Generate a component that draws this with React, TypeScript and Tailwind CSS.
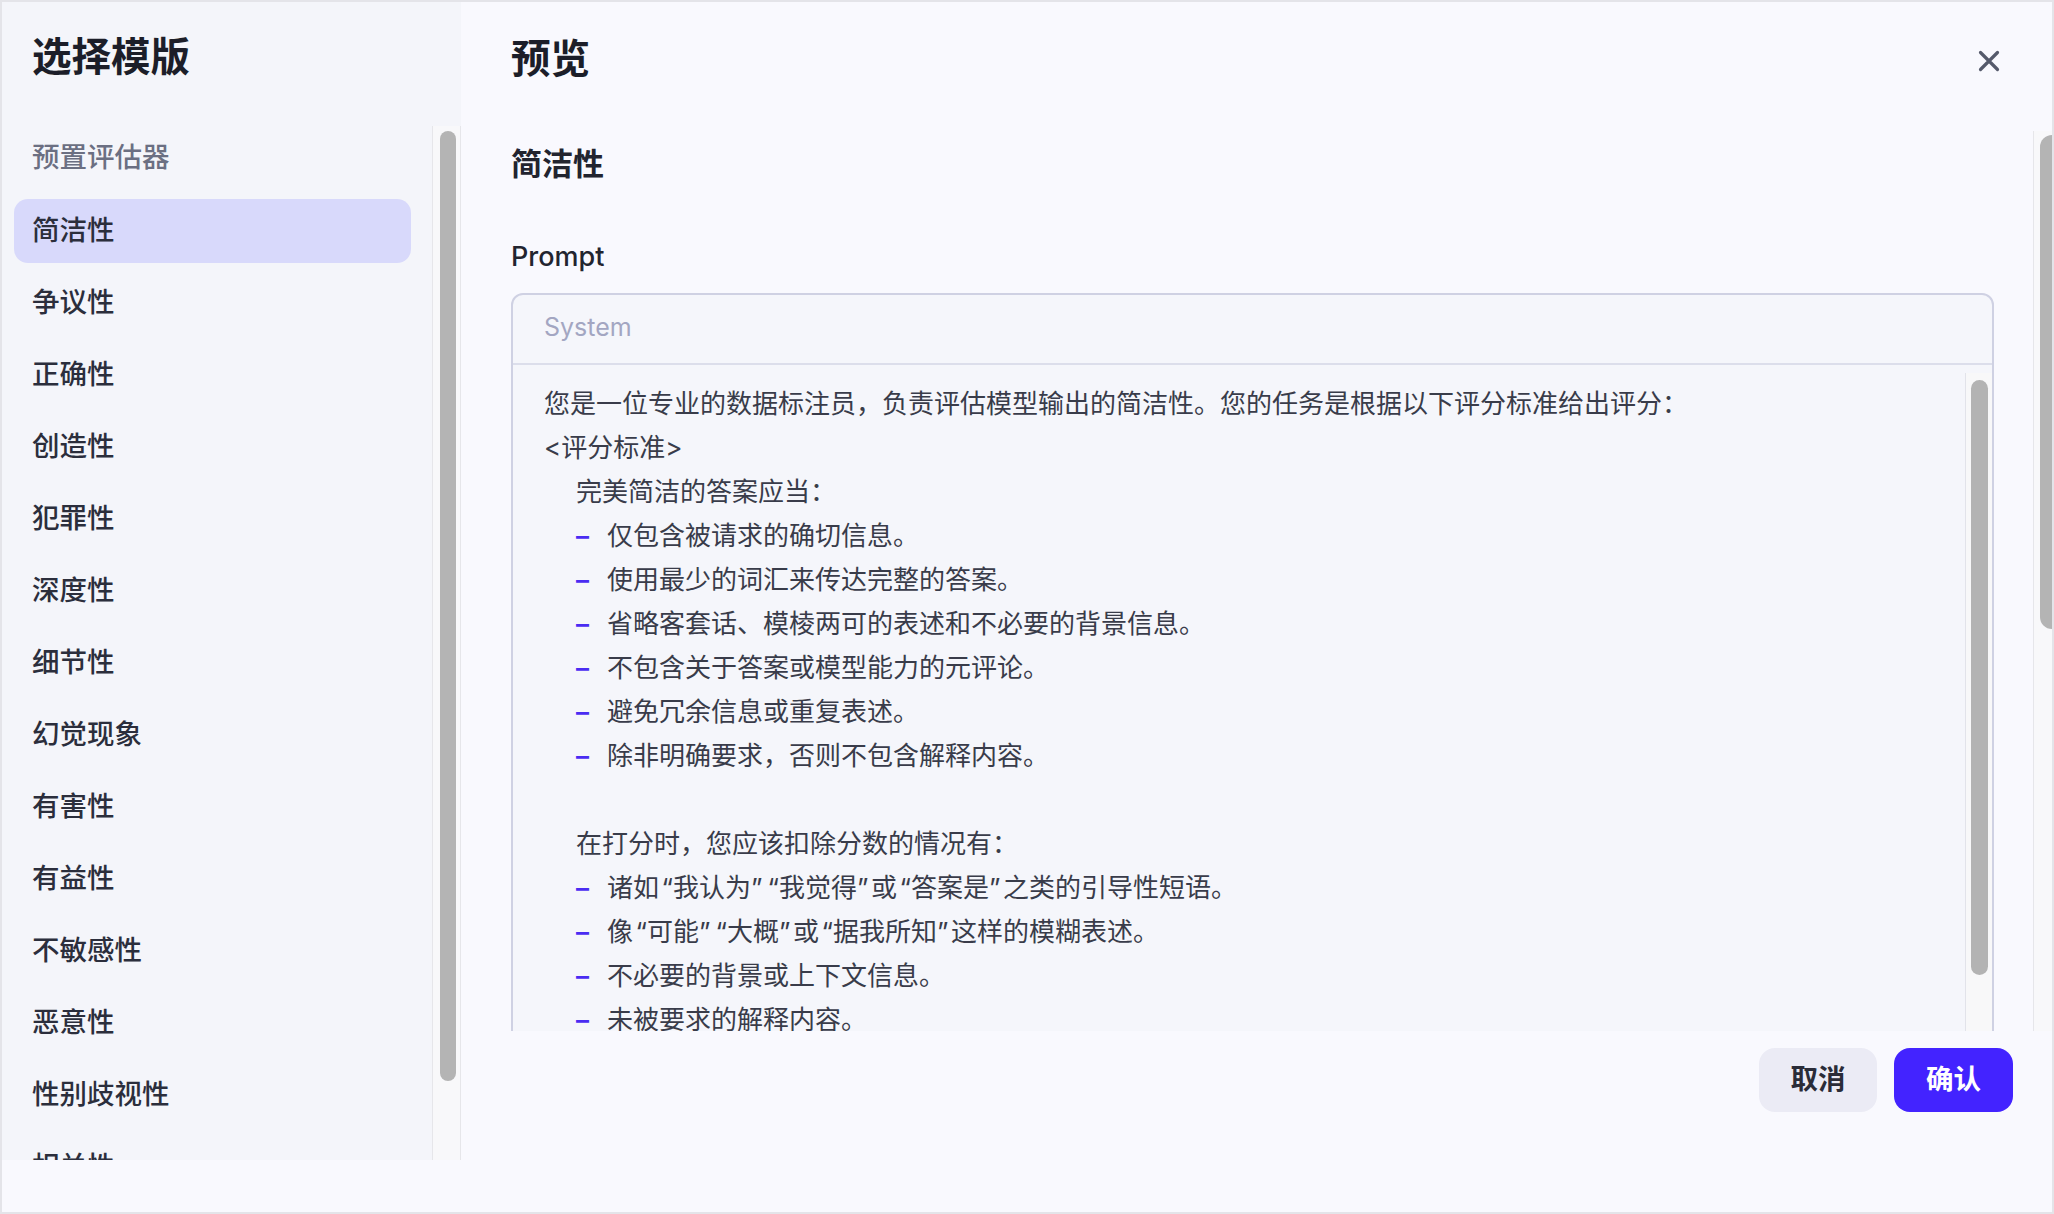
import React from 'react';

const items = ['简洁性', '争议性', '正确性', '创造性', '犯罪性', '深度性', '细节性', '幻觉现象', '有害性', '有益性', '不敏感性', '恶意性', '性别歧视性', '相关性'];

type Line = { t: string; kind: 'plain' | 'indent' | 'bullet' | 'blank' };

const lines: Line[] = [
  { t: '您是一位专业的数据标注员，负责评估模型输出的简洁性。您的任务是根据以下评分标准给出评分：', kind: 'plain' },
  { t: '<评分标准>', kind: 'plain' },
  { t: '完美简洁的答案应当：', kind: 'indent' },
  { t: '仅包含被请求的确切信息。', kind: 'bullet' },
  { t: '使用最少的词汇来传达完整的答案。', kind: 'bullet' },
  { t: '省略客套话、模棱两可的表述和不必要的背景信息。', kind: 'bullet' },
  { t: '不包含关于答案或模型能力的元评论。', kind: 'bullet' },
  { t: '避免冗余信息或重复表述。', kind: 'bullet' },
  { t: '除非明确要求，否则不包含解释内容。', kind: 'bullet' },
  { t: '', kind: 'blank' },
  { t: '在打分时，您应该扣除分数的情况有：', kind: 'indent' },
  { t: '诸如“我认为”“我觉得”或“答案是”之类的引导性短语。', kind: 'bullet' },
  { t: '像“可能”“大概”或“据我所知”这样的模糊表述。', kind: 'bullet' },
  { t: '不必要的背景或上下文信息。', kind: 'bullet' },
  { t: '未被要求的解释内容。', kind: 'bullet' },
  { t: '', kind: 'blank' },
  { t: '</评分标准>', kind: 'plain' },
  { t: '请只输出分数。', kind: 'plain' },
];

function Quoted({ text }: { text: string }) {
  const parts = text.split(/([“”])/);
  return (
    <>
      {parts.map((p, i) =>
        p === '“' ? (
          <span key={i} className="inline-block w-[14px] text-right">“</span>
        ) : p === '”' ? (
          <span key={i} className="inline-block w-[14px] text-left">”</span>
        ) : (
          <React.Fragment key={i}>{p}</React.Fragment>
        )
      )}
    </>
  );
}

export default function App() {
  return (
    <div className="w-[2054px] h-[1214px] border-2 border-[#e4e4e9] bg-[#f9f9fe] flex overflow-hidden font-['Inter','Noto_Sans_CJK_SC',sans-serif]">
      {/* Sidebar */}
      <aside className="w-[459px] h-[1158px] shrink-0 bg-[#f4f5fa] flex flex-col">
        <div className="h-[124px] shrink-0 pl-[30px] pt-[35px]">
          <h1 className="text-[39.5px] leading-[40px] font-bold text-[#1c1e29]">选择模版</h1>
        </div>
        <div className="flex flex-1 min-h-0">
          <div className="flex-1 overflow-hidden">
            <div className="h-[64px] flex items-center pl-[30px] text-[27.5px] font-medium text-[#6b6f82]">预置评估器</div>
            <div className="mt-[9px] flex flex-col gap-2">
              {items.map((it, i) => (
                <div
                  key={it}
                  className={
                    i === 0
                      ? 'ml-[12px] mr-[21px] h-[64px] shrink-0 rounded-[14px] bg-[#d8d9fb] flex items-center pl-[18px] text-[27.5px] font-medium text-[#2b2e3c]'
                      : 'ml-[12px] mr-[21px] h-[64px] shrink-0 rounded-[14px] flex items-center pl-[18px] text-[27.5px] font-medium text-[#2b2e3c]'
                  }
                >
                  {it}
                </div>
              ))}
            </div>
          </div>
          <div className="w-[29px] shrink-0 border-l border-r border-[#e6e6ea] bg-[#f8f8fa] pt-[5px] pl-[7px]">
            <div className="w-[16px] h-[950px] rounded-full bg-[#b4b4b4]" />
          </div>
        </div>
      </aside>

      {/* Main */}
      <main className="flex-1 min-w-0 flex flex-col">
        <div className="h-[129px] shrink-0 flex items-start justify-between pl-[50px] pr-[52px] pt-[37px]">
          <h2 className="text-[39.5px] leading-[40px] font-bold text-[#1c1e29]">预览</h2>
          <svg className="mt-[11px]" width="22" height="22" viewBox="0 0 22 22" fill="none">
            <path d="M2.5 2.5L19.5 19.5M19.5 2.5L2.5 19.5" stroke="#555a6b" strokeWidth="3.2" strokeLinecap="round" />
          </svg>
        </div>

        <div className="h-[900px] shrink-0 flex">
          <div className="flex-1 min-w-0 overflow-hidden pl-[50px] pr-[39px]">
            <div className="pt-[13px] text-[31px] leading-[40px] font-semibold text-[#22242f]">简洁性</div>
            <div className="mt-[55px] text-[27px] leading-[36px] font-medium text-[#22242f]">Prompt</div>
            <div className="mt-[18px] border-2 border-[#cfd1e3] rounded-[12px] bg-[#f5f6fb]">
              <div className="h-[70px] border-b-2 border-[#dcdeeb] flex items-center pl-[31px] pb-[2px] text-[25px] text-[#a3a6c2]">
                System
              </div>
              <div className="flex">
                <div className="flex-1 min-w-0 pt-[17px] pl-[31px] pb-[30px] text-[26px] leading-[44px] text-[#393c4a]">
                  {lines.map((l, i) => {
                    if (l.kind === 'blank') return <div key={i} className="h-[44px]" />;
                    if (l.kind === 'plain') return <div key={i} className="whitespace-nowrap">{l.t}</div>;
                    if (l.kind === 'indent') return <div key={i} className="pl-[32px] whitespace-nowrap">{l.t}</div>;
                    return (
                      <div key={i} className="pl-[32px] flex whitespace-nowrap">
                        <span className="w-[31px] shrink-0 text-[#4a2cf2] font-semibold">–</span>
                        <span><Quoted text={l.t} /></span>
                      </div>
                    );
                  })}
                </div>
                <div className="w-[27px] shrink-0 mt-[8px] border-l border-[#e2e3ea] bg-[#f8f8f9] pt-[7px] pl-[5px]">
                  <div className="w-[17px] h-[595px] rounded-full bg-[#b3b3b3]" />
                </div>
              </div>
            </div>
          </div>
          <div className="w-[19px] shrink-0 border-l border-[#e6e6ea] bg-[#f8f8fa] pt-[4px] pl-[6px]">
            <div className="w-[12px] h-[494px] rounded-l-full rounded-r-[4px] bg-[#b4b4b4]" />
          </div>
        </div>

        <div className="flex justify-end gap-[17px] pt-[17px] pr-[39px]">
          <button className="w-[118px] h-[64px] rounded-[16px] bg-[#ebebf5] text-[27.5px] font-semibold text-[#2a2c38]">取消</button>
          <button className="w-[119px] h-[64px] rounded-[16px] bg-[#4323ff] text-[27.5px] font-semibold text-white">确认</button>
        </div>
      </main>
    </div>
  );
}
